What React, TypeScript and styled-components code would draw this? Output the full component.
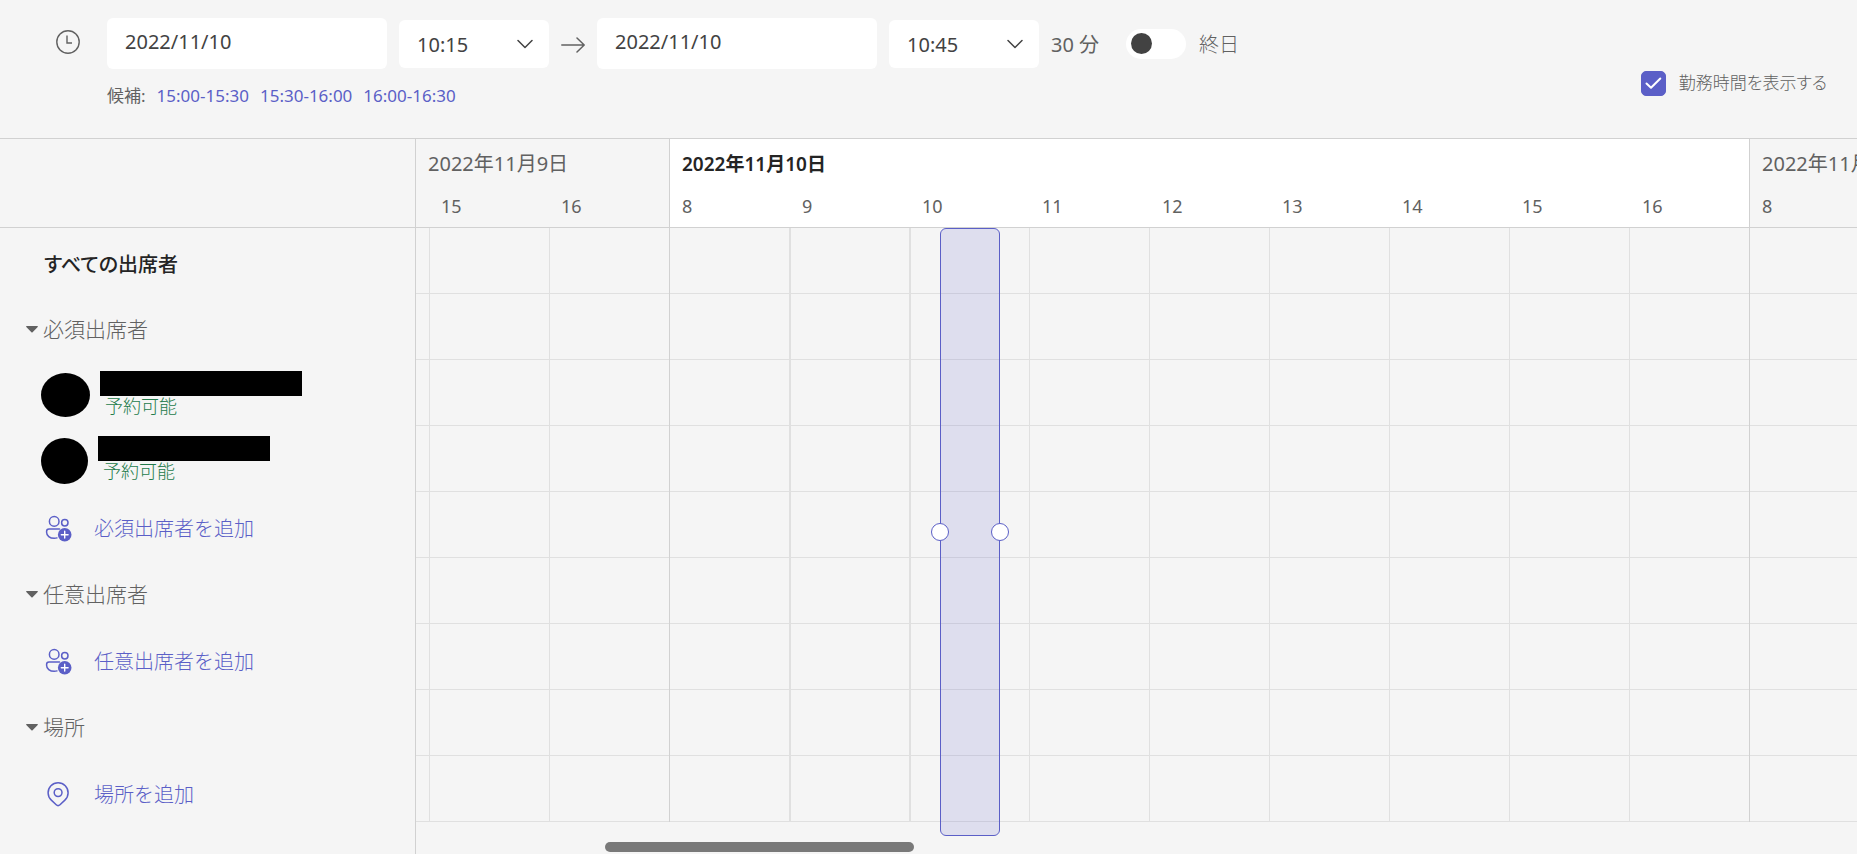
import React from "react";
import styled, { createGlobalStyle } from "styled-components";

const color = {
  page: "#f5f5f5",
  brand: "#5b5fc7",
  text: "#242424",
  field: "#424242",
  muted: "#616161",
  line: "#d1d1d1",
  gridLine: "#e0e0e0",
  free: "#237b4b",
};

const GlobalStyle = createGlobalStyle`
  *, *::before, *::after { box-sizing: border-box; }
  body {
    margin: 0;
    background: ${color.page};
    color: ${color.muted};
    font-family: "Noto Sans", "Noto Sans CJK JP", sans-serif;
    font-size: 20px;
    line-height: 28px;
  }
  button, input, select { font: inherit; color: inherit; }
  svg { display: block; flex: none; }
`;

const Page = styled.div`
  min-height: 100vh;
  display: flex;
  flex-direction: column;
  overflow: hidden;
`;

/* ---------- toolbar ---------- */

const Toolbar = styled.header`
  display: flex;
  justify-content: space-between;
  align-items: flex-start;
  height: 139px;
  padding: 18px 30px 0 56px;
  border-bottom: 1px solid ${color.line};
`;

const TimeForm = styled.form`
  display: grid;
  grid-template-columns: 24px auto;
  column-gap: 27px;
  row-gap: 13px;
`;

const TimeRow = styled.div`
  display: flex;
  align-items: center;
  gap: 12px;
`;

const ClockSlot = styled.div`
  padding-top: 12px;
`;

const DateInput = styled.input`
  width: 280px;
  height: 51px;
  padding: 0 18px 4px;
  border: 0;
  border-radius: 6px;
  background: #fff;
  color: ${color.field};
`;

const SelectBox = styled.div`
  position: relative;
  width: 150px;
  height: 48px;

  svg {
    position: absolute;
    right: 16px;
    top: 19px;
    pointer-events: none;
  }
`;

const TimeSelect = styled.select`
  appearance: none;
  width: 100%;
  height: 100%;
  padding: 2px 40px 0 18px;
  border: 0;
  border-radius: 6px;
  background: #fff;
  color: ${color.field};
`;

const Duration = styled.span`
  padding-top: 2px;
  white-space: nowrap;
`;

const SwitchLabel = styled.label`
  display: flex;
  align-items: center;
  gap: 13px;
  margin-left: 15px;
  white-space: nowrap;
`;

const Switch = styled.input`
  appearance: none;
  display: flex;
  align-items: center;
  width: 60px;
  height: 30px;
  margin: 0;
  padding: 0 5px;
  border-radius: 15px;
  background: #fff;

  &::before {
    content: "";
    width: 21px;
    height: 21px;
    border-radius: 50%;
    background: ${color.field};
  }
  &:checked { background: ${color.brand}; justify-content: flex-end; }
  &:checked::before { background: #fff; }
`;

const SwitchText = styled.span`
  padding-top: 2px;
  font-weight: 300;
`;

const Suggestions = styled.div`
  grid-column: 2;
  display: flex;
  gap: 11px;
  font-size: 17px;
`;

const SuggestionLink = styled.a`
  color: ${color.brand};
  text-decoration: none;
`;

const HoursOption = styled.label`
  display: flex;
  align-items: center;
  gap: 13px;
  margin-top: 51px;
  font-size: 17px;
  font-weight: 300;
  font-feature-settings: "palt";
  white-space: nowrap;
`;

const CheckSlot = styled.span`
  display: grid;

  > * { grid-area: 1 / 1; }
  svg { place-self: center; pointer-events: none; }
`;

const Checkbox = styled.input`
  appearance: none;
  width: 25px;
  height: 25px;
  margin: 0;
  border: 1px solid ${color.brand};
  border-radius: 5px;

  &:checked { background: ${color.brand}; }
`;

/* ---------- scheduler ---------- */

const Scheduler = styled.main`
  flex: 1;
  display: flex;
`;

const Sidebar = styled.aside`
  flex: none;
  width: 416px;
  border-right: 1px solid ${color.line};
`;

const SidebarHead = styled.div`
  height: 89px;
  border-bottom: 1px solid ${color.line};
`;

const AttendeeList = styled.div`
  padding-top: 3px;
`;

const AllAttendees = styled.h2`
  display: flex;
  align-items: center;
  height: 66px;
  margin: 0;
  padding: 2px 0 0 44px;
  font-size: 20px;
  font-weight: 500;
  font-feature-settings: "palt";
  color: ${color.text};
`;

const GroupButton = styled.button`
  display: flex;
  align-items: center;
  gap: 5px;
  width: 100%;
  height: 66px;
  padding: 0 0 2px 26px;
  border: 0;
  background: none;
  font-size: 21px;
  font-weight: 300;
`;

const AddButton = styled.button`
  display: flex;
  align-items: center;
  gap: 22px;
  width: 100%;
  height: 67px;
  padding: 0 0 0 45px;
  border: 0;
  background: none;
  font-size: 20px;
  font-weight: 300;
  color: ${color.brand};
`;

const Person = styled.div<{ $top: number }>`
  display: flex;
  align-items: flex-start;
  gap: 10px;
  height: 66px;
  padding: ${(p) => p.$top}px 0 0 41px;
`;

const Avatar = styled.div<{ $width: number; $height: number }>`
  width: ${(p) => p.$width}px;
  height: ${(p) => p.$height}px;
  margin-top: 2px;
  border-radius: 50%;
  background: #000;
`;

const PersonText = styled.div`
  display: flex;
  flex-direction: column;
`;

const HiddenName = styled.div<{ $width: number }>`
  width: ${(p) => p.$width}px;
  height: 25px;
  background: #000;
`;

const Status = styled.span`
  padding-left: 5px;
  font-size: 18px;
  line-height: 20px;
  font-weight: 300;
  color: ${color.free};
`;

const Timeline = styled.section`
  flex: 1;
  min-width: 0;
  overflow: hidden;
`;

const TimelineHead = styled.div`
  display: flex;
  height: 89px;
  border-bottom: 1px solid ${color.line};
`;

const DayHead = styled.div<{ $active?: boolean; $divided: boolean; $width: number }>`
  flex: none;
  width: ${(p) => p.$width}px;
  border-left: ${(p) => (p.$divided ? `1px solid ${color.line}` : "0")};
  background: ${(p) => (p.$active ? "#fff" : "transparent")};
`;

const DayTitle = styled.h3<{ $active?: boolean }>`
  margin: 0;
  padding: 11px 0 14px 12px;
  font-size: ${(p) => (p.$active ? 19 : 20)}px;
  font-weight: ${(p) => (p.$active ? 600 : 400)};
  color: ${(p) => (p.$active ? color.text : color.muted)};
  white-space: nowrap;
`;

const HourLabels = styled.div<{ $inset: number }>`
  display: flex;
  padding-left: ${(p) => p.$inset}px;
  font-size: 18px;
`;

const HourLabel = styled.span`
  flex: none;
  width: 120px;
  padding-left: 12px;
`;

const Grid = styled.div`
  position: relative;
  display: flex;
`;

const HourColumn = styled.div<{ $kind: "partial" | "day" | "strong" | "plain" }>`
  flex: none;
  width: ${(p) => (p.$kind === "partial" ? 13 : 120)}px;
  border-left: ${(p) =>
    ({
      partial: "0",
      day: `1px solid ${color.line}`,
      strong: `2px solid ${color.gridLine}`,
      plain: `1px solid ${color.gridLine}`,
    })[p.$kind]};
`;

const Slot = styled.div`
  height: 66px;
  border-bottom: 1px solid ${color.gridLine};
`;

const Selection = styled.div`
  position: absolute;
  top: 0;
  left: 524px;
  width: 60px;
  height: 608px;
  border: 1px solid ${color.brand};
  border-radius: 6px;
  background: rgba(91, 95, 199, 0.15);
`;

const Handle = styled.span<{ $side: "left" | "right" }>`
  position: absolute;
  top: 50%;
  ${(p) => p.$side}: -10px;
  width: 18px;
  height: 18px;
  margin-top: -9px;
  border: 1px solid ${color.brand};
  border-radius: 50%;
  background: #fff;
`;

const ScrollTrack = styled.div`
  padding: 20px 0 2px 189px;
`;

const ScrollThumb = styled.div`
  width: 309px;
  height: 10px;
  border-radius: 5px;
  background: #797979;
`;

/* ---------- icons ---------- */

const ClockIcon = () => (
  <svg width="24" height="24" viewBox="0 0 24 24" fill="none" stroke={color.muted} strokeWidth="1.4">
    <circle cx="12" cy="12" r="11.2" />
    <path d="M11 5.5V13h5" />
  </svg>
);

const ArrowIcon = () => (
  <svg width="24" height="18" viewBox="0 0 24 18" fill="none" stroke={color.muted} strokeWidth="1.5" strokeLinecap="round" strokeLinejoin="round">
    <path d="M.8 10h22M16 3l7.2 7-7.2 7" />
  </svg>
);

const ChevronIcon = () => (
  <svg width="16" height="10" viewBox="0 0 16 10" fill="none" stroke={color.field} strokeWidth="1.5" strokeLinecap="round" strokeLinejoin="round">
    <path d="M1 1.5l7 7 7-7" />
  </svg>
);

const CheckIcon = () => (
  <svg width="17" height="13" viewBox="0 0 17 13" fill="none" stroke="#fff" strokeWidth="2" strokeLinecap="round" strokeLinejoin="round">
    <path d="M1.5 6.5l4.5 4.3L15.3 1.5" />
  </svg>
);

const CaretIcon = () => (
  <svg width="12" height="7" viewBox="0 0 12 7" fill={color.muted}>
    <path d="M.8 0h10.4c.7 0 1 .7.5 1.1L6.6 6.3c-.4.4-.8.4-1.2 0L.3 1.1C-.2.7.1 0 .8 0z" />
  </svg>
);

const AddPeopleIcon = () => (
  <svg width="27" height="27" viewBox="0 0 27 27" fill="none" stroke={color.brand} strokeWidth="1.5">
    <circle cx="9.2" cy="6.4" r="4.8" />
    <circle cx="19.8" cy="7.8" r="3.2" />
    <path d="M14.5 14H4a2.4 2.4 0 0 0-2.4 2.4v.8c0 3.6 3.2 6.1 7.6 6.1 1 0 2-.1 2.8-.4" strokeLinecap="round" />
    <circle cx="19.7" cy="19.7" r="6.8" fill={color.brand} stroke="none" />
    <path d="M19.7 16.3v6.8M16.3 19.7h6.8" stroke="#fff" strokeWidth="1.4" strokeLinecap="round" />
  </svg>
);

const PinIcon = () => (
  <svg width="27" height="27" viewBox="0 0 27 27" fill="none" stroke={color.brand} strokeWidth="1.5">
    <path d="M19.9 19.1l-4.9 4.6c-1.1 1-2.8 1-3.8 0l-4.9-4.6a10 10 0 1 1 13.6 0z" />
    <circle cx="13.1" cy="11.6" r="3.9" />
  </svg>
);

/* ---------- data ---------- */

const suggestions = ["15:00-15:30", "15:30-16:00", "16:00-16:30"];
const slots = Array.from({ length: 9 }, (_, i) => i);
const days = [
  { title: "2022年11月9日", hours: [15, 16], inset: 13, active: false },
  { title: "2022年11月10日", hours: [8, 9, 10, 11, 12, 13, 14, 15, 16], inset: 0, active: true },
  { title: "2022年11月11日", hours: [8], inset: 0, active: false },
];
const people = [
  { avatar: [49, 44], name: 202, top: 8 },
  { avatar: [47, 46], name: 172, top: 7 },
];

const TimePicker = ({ label, value }: { label: string; value: string }) => (
  <SelectBox>
    <TimeSelect aria-label={label} defaultValue={value}>
      <option>{value}</option>
    </TimeSelect>
    <ChevronIcon />
  </SelectBox>
);

const Column = ({ kind }: { kind: "partial" | "day" | "strong" | "plain" }) => (
  <HourColumn $kind={kind}>
    {slots.map((s) => (
      <Slot key={s} />
    ))}
  </HourColumn>
);

const columnKind = (active: boolean, hour: number) => {
  if (hour === 8) return "day";
  return active && (hour === 9 || hour === 10) ? "strong" : "plain";
};

export default function App() {
  return (
    <Page>
      <GlobalStyle />
      <Toolbar>
        <TimeForm>
          <ClockSlot>
            <ClockIcon />
          </ClockSlot>
          <TimeRow>
            <DateInput aria-label="開始日" defaultValue="2022/11/10" />
            <TimePicker label="開始時刻" value="10:15" />
            <ArrowIcon />
            <DateInput aria-label="終了日" defaultValue="2022/11/10" />
            <TimePicker label="終了時刻" value="10:45" />
            <Duration>30 分</Duration>
            <SwitchLabel>
              <Switch type="checkbox" role="switch" />
              <SwitchText>終日</SwitchText>
            </SwitchLabel>
          </TimeRow>
          <Suggestions>
            <span>候補:</span>
            {suggestions.map((s) => (
              <SuggestionLink key={s} href="#">
                {s}
              </SuggestionLink>
            ))}
          </Suggestions>
        </TimeForm>
        <HoursOption>
          <CheckSlot>
            <Checkbox type="checkbox" defaultChecked />
            <CheckIcon />
          </CheckSlot>
          勤務時間を表示する
        </HoursOption>
      </Toolbar>

      <Scheduler>
        <Sidebar>
          <SidebarHead />
          <AttendeeList>
            <AllAttendees>すべての出席者</AllAttendees>
            <GroupButton type="button">
              <CaretIcon />
              必須出席者
            </GroupButton>
            {people.map((p) => (
              <Person key={p.name} $top={p.top}>
                <Avatar $width={p.avatar[0]} $height={p.avatar[1]} />
                <PersonText>
                  <HiddenName $width={p.name} />
                  <Status>予約可能</Status>
                </PersonText>
              </Person>
            ))}
            <AddButton type="button">
              <AddPeopleIcon />
              必須出席者を追加
            </AddButton>
            <GroupButton type="button">
              <CaretIcon />
              任意出席者
            </GroupButton>
            <AddButton type="button">
              <AddPeopleIcon />
              任意出席者を追加
            </AddButton>
            <GroupButton type="button">
              <CaretIcon />
              場所
            </GroupButton>
            <AddButton type="button">
              <PinIcon />
              場所を追加
            </AddButton>
          </AttendeeList>
        </Sidebar>

        <Timeline>
          <TimelineHead>
            {days.map((d, i) => (
              <DayHead key={d.title} $active={d.active} $divided={i > 0} $width={d.inset + d.hours.length * 120}>
                <DayTitle $active={d.active}>{d.title}</DayTitle>
                <HourLabels $inset={d.inset}>
                  {d.hours.map((h) => (
                    <HourLabel key={h}>{h}</HourLabel>
                  ))}
                </HourLabels>
              </DayHead>
            ))}
          </TimelineHead>
          <Grid>
            <Column kind="partial" />
            {days.map((d) => d.hours.map((h) => <Column key={d.title + h} kind={columnKind(d.active, h)} />))}
            <Selection>
              <Handle $side="left" />
              <Handle $side="right" />
            </Selection>
          </Grid>
          <ScrollTrack>
            <ScrollThumb />
          </ScrollTrack>
        </Timeline>
      </Scheduler>
    </Page>
  );
}
